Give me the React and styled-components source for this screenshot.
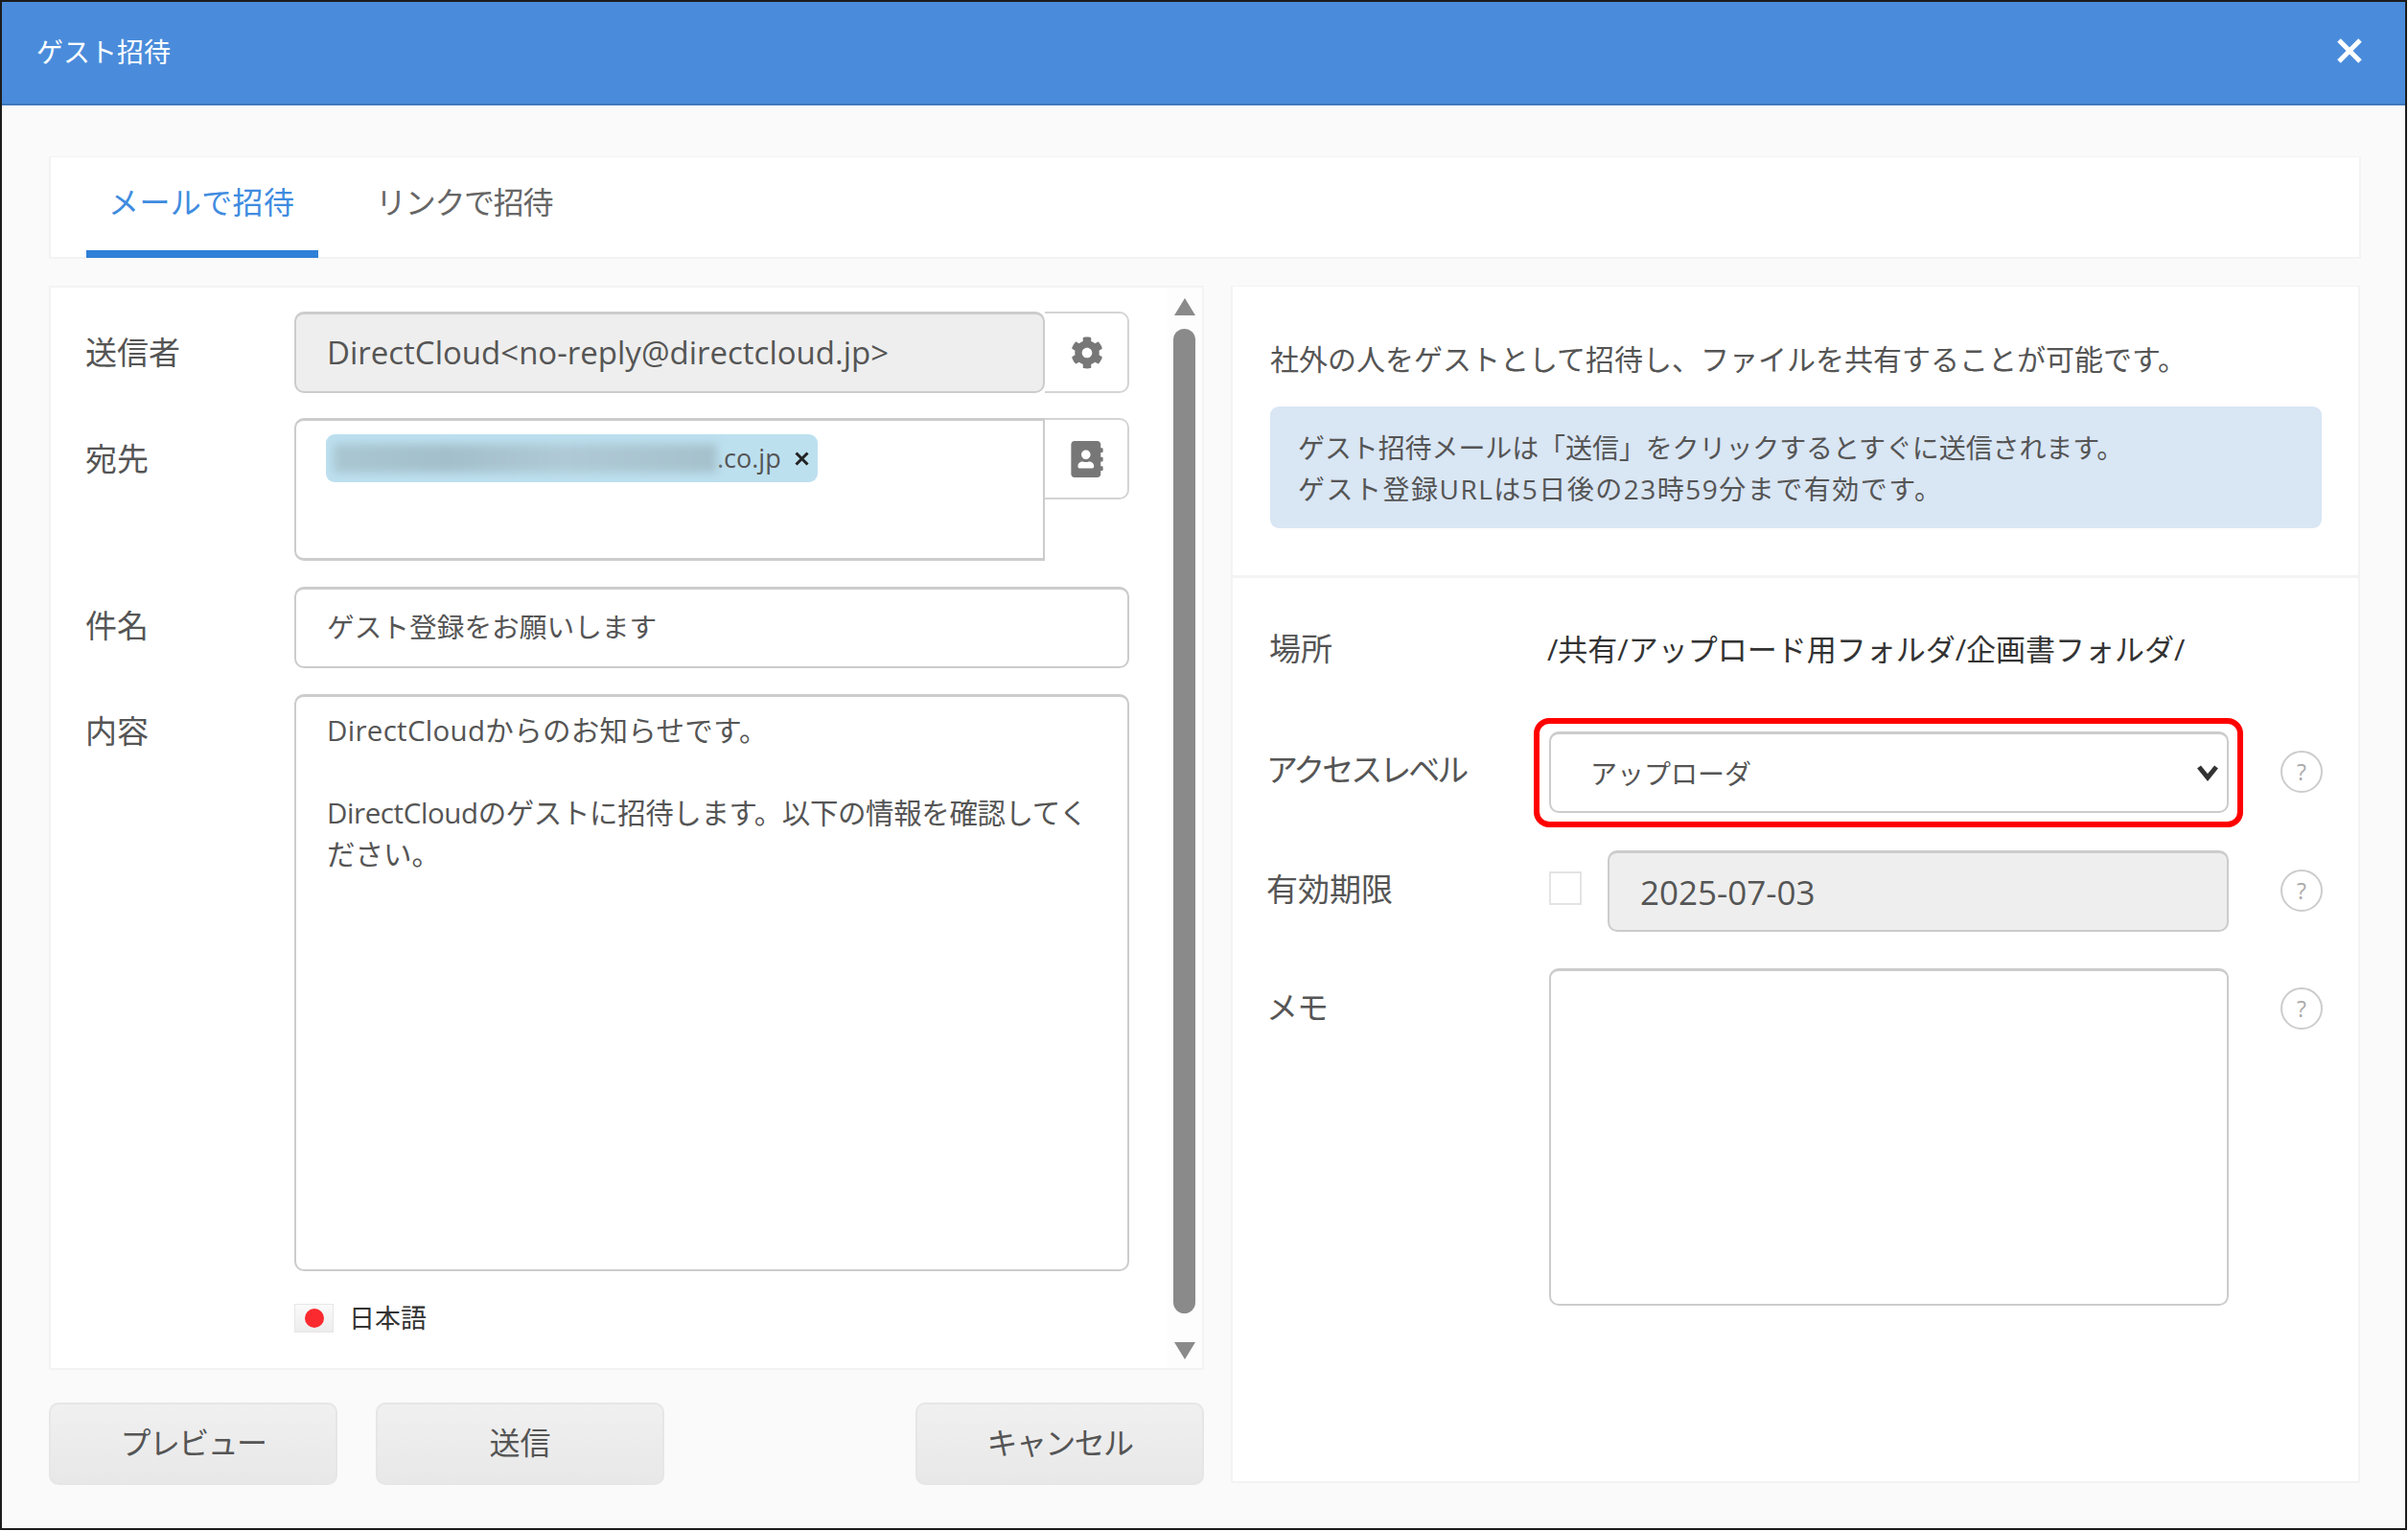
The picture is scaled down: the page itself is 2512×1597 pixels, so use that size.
import React from "react";
import styled, { createGlobalStyle } from "styled-components";
import { FaCog, FaAddressBook } from "react-icons/fa";

const Global = createGlobalStyle`
  html, body { margin: 0; padding: 0; background: #fff; }
  body { font-family: "Open Sans", "Noto Sans CJK JP", sans-serif; color: #555; }
  * { box-sizing: border-box; }
`;

const Dialog = styled.div`
  width: 2511px;
  height: 1596px;
  border: 2px solid #1c1c1c;
  background: #fafafa;
  display: flex;
  flex-direction: column;
`;
const Header = styled.header`
  height: 108px;
  flex: none;
  background: #4a8cdb;
  border-bottom: 2px solid #4279bd;
  display: flex;
  align-items: center;
  justify-content: space-between;
  padding: 0 45px 4px 36px;
  color: #fff;
  font-size: 28px;
`;
const Body = styled.div`
  flex: 1;
  padding: 53px 46px 0 49px;
  display: flex;
  flex-direction: column;
  gap: 28px;
`;
const TabBar = styled.nav`
  height: 107px;
  background: #fff;
  border: 2px solid #f3f3f3;
  border-top-width: 1px;
  padding-left: 37px;
  display: flex;
`;
const Tab = styled.div`
  width: ${(p) => (p.$active ? "242px" : "auto")};
  height: 105px;
  padding: 23px ${(p) => (p.$active ? "0 0 23px" : "27px 0")};
  margin-right: 33px;
  line-height: 48px;
  font-size: 32px;
  letter-spacing: ${(p) => (p.$active ? "0.4px" : "-1.3px")};
  color: ${(p) => (p.$active ? "#3f8ce0" : "#666")};
  border-bottom: 8px solid ${(p) => (p.$active ? "#2f80d8" : "transparent")};
`;
const Columns = styled.div`
  display: grid;
  grid-template-columns: 1205px 1178px;
  gap: 28px;
`;
const LeftColumn = styled.div`
  display: flex;
  flex-direction: column;
  gap: 34px;
`;
const Card = styled.section`
  background: #fff;
  border: 2px solid #f3f3f3;
`;
const FormCard = styled(Card)`
  height: 1131px;
  display: flex;
  justify-content: space-between;
`;
const Form = styled.div`
  width: 1125px;
  padding: 25px 0 0 36px;
`;
const FormRow = styled.div`
  display: grid;
  grid-template-columns: 218px 871px;
  margin-bottom: ${(p) => p.$gap ?? 27}px;
`;
const Label = styled.label`
  font-size: 33px;
  line-height: ${(p) => p.$lh ?? 85}px;
  color: #555;
  letter-spacing: ${(p) => p.$spacing ?? 0}px;
  white-space: nowrap;
`;
const Field = styled.div`
  display: flex;
  align-items: flex-start;
`;
const TextBox = styled.div`
  flex: 1;
  height: 85px;
  border: 2px solid #ccc;
  border-top-width: 3px;
  border-radius: 10px;
  background: ${(p) => (p.$disabled ? "#eee" : "#fff")};
  padding: 0 0 0 32px;
  line-height: ${(p) => p.$lh ?? 80}px;
  font-size: ${(p) => p.$size ?? 28.7}px;
  color: #555;
  white-space: nowrap;
`;
const AddOn = styled.div`
  width: 88px;
  height: 85px;
  flex: none;
  border: 2px solid #d4d4d4;
  border-left: none;
  border-radius: 0 10px 10px 0;
  display: flex;
  align-items: center;
  justify-content: center;
  padding-left: 2px;
  color: #777;
  font-size: ${(p) => p.$size}px;
`;
const Recipients = styled.div`
  flex: 1;
  height: 149px;
  border: 2px solid #ccc;
  border-top-width: 3px;
  border-bottom-width: 3px;
  border-radius: 10px 0 0 10px;
  padding: 14px 0 0 31px;
`;
const Chip = styled.div`
  width: 513px;
  height: 50px;
  background: #bde0ef;
  border-radius: 9px;
  overflow: hidden;
  display: flex;
  align-items: center;
  padding-left: 8px;
  font-size: 27px;
  color: #555;
`;
const Blurred = styled.div`
  width: 400px;
  height: 30px;
  flex: none;
  background: linear-gradient(90deg, #a9c6d2, #a3bfcb 30%, #afcad6 60%, #a5c1cc);
  filter: blur(5px);
`;
const ChipText = styled.span`
  flex: none;
  line-height: 50px;
`;
const ChipRemove = styled.svg`
  width: 15px;
  height: 15px;
  margin-left: 14px;
  flex: none;
`;
const MessageBox = styled.div`
  flex: 1;
  height: 602px;
  border: 2px solid #ccc;
  border-top-width: 3px;
  border-radius: 10px;
  padding: 13px 20px 0 32px;
  font-size: 29.5px;
  line-height: 43px;
  color: #555;
`;
const MessageLine = styled.div`
  min-height: ${(p) => (p.$blank ? 43 : 0)}px;
  white-space: nowrap;
  letter-spacing: ${(p) => p.$spacing ?? 0}px;
`;
const LanguageRow = styled.div`
  display: flex;
  align-items: center;
  gap: 16px;
  margin-left: 218px;
  height: 30px;
  font-size: 27px;
  color: #333;
`;
const LanguageName = styled.span`
  padding-bottom: 4px;
`;
const Flag = styled.span`
  width: 41px;
  height: 30px;
  background: linear-gradient(#fafafa, #ececec);
  border: 1px solid #e6e6e6;
  display: flex;
  align-items: center;
  justify-content: center;
  &::after {
    content: "";
    width: 20px;
    height: 20px;
    border-radius: 50%;
    background: #fb2a2f;
  }
`;
const ScrollRail = styled.div`
  width: 37px;
  flex: none;
  background: #fdfdfd;
  padding: 11px 7px 0 7px;
  display: flex;
  flex-direction: column;
  align-items: center;
`;
const Arrow = styled.span`
  width: 0;
  height: 0;
  flex: none;
  border-left: 11px solid transparent;
  border-right: 11px solid transparent;
  border-bottom: ${(p) => (p.$down ? "0" : "18px solid #8a8a8a")};
  border-top: ${(p) => (p.$down ? "18px solid #8a8a8a" : "0")};
`;
const ScrollThumb = styled.div`
  width: 23px;
  height: 1027px;
  flex: none;
  margin: 14px 0 30px;
  background: #8a8a8a;
  border-radius: 12px;
`;
const Footer = styled.div`
  display: flex;
  gap: 40px;
`;
const Button = styled.button`
  width: 301px;
  height: 86px;
  margin-left: ${(p) => (p.$end ? "auto" : "0")};
  border: 2px solid #e6e6e6;
  border-radius: 10px;
  background: linear-gradient(#f0f0f0, #e8e8e8);
  font-family: inherit;
  font-size: 32px;
  letter-spacing: ${(p) => (p.$tight ? "-1.6px" : "0")};
  color: #555;
  padding: 0 0 6px;
`;
const SideCard = styled(Card)`
  height: 1249px;
  border-top-width: 1px;
`;
const Intro = styled.div`
  height: 304px;
  padding: 54px 39px 0;
  border-bottom: 3px solid #f3f3f3;
`;
const IntroText = styled.p`
  margin: 0 0 27px;
  font-size: 30px;
  line-height: 44px;
  color: #555;
  white-space: nowrap;
`;
const Notice = styled.div`
  width: 1097px;
  height: 127px;
  background: #d9e6f4;
  border-radius: 9px;
  padding: 22px 29px 0;
  font-size: 28px;
  line-height: 43px;
  color: #555;
  white-space: nowrap;
`;
const Settings = styled.div`
  padding: 50px 0 0 35px;
`;
const SettingRow = styled.div`
  display: grid;
  grid-template-columns: 295px 709px 44px;
  margin-bottom: ${(p) => p.$gap}px;
  & > :nth-child(3) { margin-left: 54px; margin-top: 20px; }
`;
const LocationLabel = styled(Label)`
  margin-left: 3px;
`;
const PathText = styled.div`
  font-size: 31px;
  line-height: 48px;
  color: #333;
  white-space: nowrap;
  margin-left: -2px;
`;
const SelectWrap = styled.div`
  position: relative;
`;
const Select = styled.div`
  height: 85px;
  border: 2px solid #ccc;
  border-top-width: 3px;
  border-radius: 10px;
  background: #fff;
  padding-left: 41px;
  display: flex;
  align-items: center;
  justify-content: space-between;
  font-size: 28px;
  color: #555;
`;
const Chevron = styled.svg`
  width: 24px;
  height: 18px;
  margin-right: 8px;
`;
const Highlight = styled.div`
  position: absolute;
  left: -16px;
  top: -14px;
  width: 740px;
  height: 114px;
  border: 6px solid #ff0000;
  border-radius: 16px;
  pointer-events: none;
`;
const DateField = styled.div`
  display: flex;
  align-items: flex-start;
  gap: 27px;
`;
const Check = styled.span`
  width: 34px;
  height: 35px;
  flex: none;
  margin-top: 22px;
  border: 2px solid #e4e4e4;
  background: #fff;
`;
const MemoBox = styled.div`
  height: 352px;
  border: 2px solid #ccc;
  border-top-width: 3px;
  border-radius: 10px;
  background: #fff;
`;
const Help = styled.span`
  width: 44px;
  height: 44px;
  border: 2px solid #ccc;
  border-radius: 50%;
  display: flex;
  align-items: center;
  justify-content: center;
  font-size: 23px;
  color: #aaa;
  background: #fff;
`;
const CloseIcon = styled.svg`
  width: 26px;
  height: 26px;
`;

export default function App() {
  return (
    <>
      <Global />
      <Dialog>
        <Header>
          <span>ゲスト招待</span>
          <CloseIcon viewBox="0 0 26 26" fill="none" stroke="#fff" strokeWidth="5">
            <path d="M2 2 L24 24 M24 2 L2 24" />
          </CloseIcon>
        </Header>
        <Body>
          <TabBar>
            <Tab $active>メールで招待</Tab>
            <Tab>リンクで招待</Tab>
          </TabBar>
          <Columns>
            <LeftColumn>
              <FormCard>
                <Form>
                  <FormRow $gap={26}>
                    <Label>送信者</Label>
                    <Field>
                      <TextBox $disabled $size={33}>DirectCloud&lt;no-reply@directcloud.jp&gt;</TextBox>
                      <AddOn $size={34}><FaCog /></AddOn>
                    </Field>
                  </FormRow>
                  <FormRow>
                    <Label>宛先</Label>
                    <Field>
                      <Recipients>
                        <Chip>
                          <Blurred />
                          <ChipText>.co.jp</ChipText>
                          <ChipRemove viewBox="0 0 15 15" fill="none" stroke="#222" strokeWidth="3">
                            <path d="M1.5 1.5 L13.5 13.5 M13.5 1.5 L1.5 13.5" />
                          </ChipRemove>
                        </Chip>
                      </Recipients>
                      <AddOn $size={38}><FaAddressBook /></AddOn>
                    </Field>
                  </FormRow>
                  <FormRow>
                    <Label $lh={82}>件名</Label>
                    <Field><TextBox $lh={78}>ゲスト登録をお願いします</TextBox></Field>
                  </FormRow>
                  <FormRow $gap={34}>
                    <Label $lh={77}>内容</Label>
                    <Field>
                      <MessageBox>
                        <MessageLine $spacing={0.3}>DirectCloudからのお知らせです。</MessageLine>
                        <MessageLine $blank />
                        <MessageLine $spacing={-0.4}>DirectCloudのゲストに招待します。以下の情報を確認してく</MessageLine>
                        <MessageLine>ださい。</MessageLine>
                      </MessageBox>
                    </Field>
                  </FormRow>
                  <LanguageRow><Flag /><LanguageName>日本語</LanguageName></LanguageRow>
                </Form>
                <ScrollRail>
                  <Arrow />
                  <ScrollThumb />
                  <Arrow $down />
                </ScrollRail>
              </FormCard>
              <Footer>
                <Button $tight>プレビュー</Button>
                <Button>送信</Button>
                <Button $end $tight>キャンセル</Button>
              </Footer>
            </LeftColumn>
            <SideCard>
              <Intro>
                <IntroText>社外の人をゲストとして招待し、ファイルを共有することが可能です。</IntroText>
                <Notice>
                  <MessageLine $spacing={-0.1}>ゲスト招待メールは「送信」をクリックするとすぐに送信されます。</MessageLine>
                  <MessageLine $spacing={1.5}>ゲスト登録URLは5日後の23時59分まで有効です。</MessageLine>
                </Notice>
              </Intro>
              <Settings>
                <SettingRow $gap={62}>
                  <LocationLabel $lh={48}>場所</LocationLabel>
                  <PathText>/共有/アップロード用フォルダ/企画書フォルダ/</PathText>
                  <span />
                </SettingRow>
                <SettingRow $gap={39}>
                  <Label $lh={79} $spacing={-3}>アクセスレベル</Label>
                  <SelectWrap>
                    <Select>
                      アップローダ
                      <Chevron viewBox="0 0 24 18" fill="none" stroke="#333" strokeWidth="5">
                        <path d="M3 3 L12 14 L21 3" />
                      </Chevron>
                    </Select>
                    <Highlight />
                  </SelectWrap>
                  <Help>?</Help>
                </SettingRow>
                <SettingRow $gap={38}>
                  <Label $lh={81}>有効期限</Label>
                  <DateField>
                    <Check />
                    <TextBox $disabled $size={35} $lh={82}>2025-07-03</TextBox>
                  </DateField>
                  <Help>?</Help>
                </SettingRow>
                <SettingRow $gap={0}>
                  <Label $lh={81} $spacing={-1}>メモ</Label>
                  <MemoBox />
                  <Help>?</Help>
                </SettingRow>
              </Settings>
            </SideCard>
          </Columns>
        </Body>
      </Dialog>
    </>
  );
}
